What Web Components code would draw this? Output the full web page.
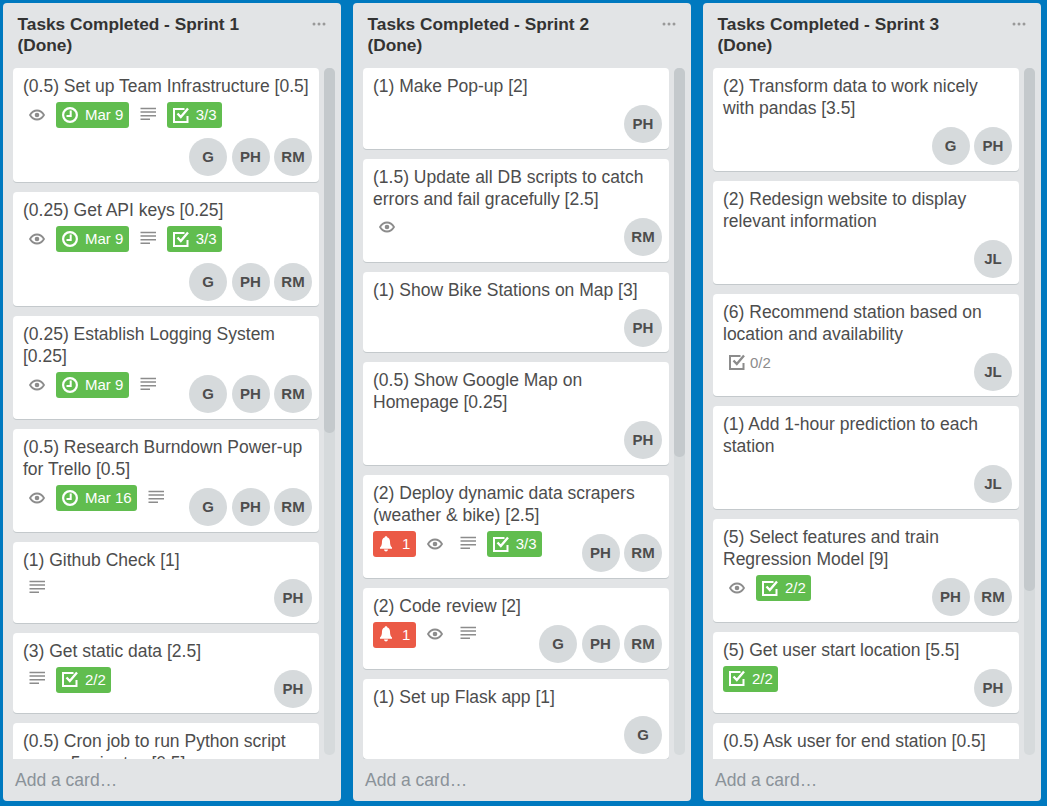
<!DOCTYPE html>
<html lang="en">
<head>
<meta charset="utf-8">
<title>Sprint board</title>
<style>
    html, body { margin: 0; height: 100%; }
    body { background: #0079bf; overflow: hidden; font-family: "Liberation Sans", Arial, sans-serif; }
</style>
</head>
<body>
<sprint-board>
    <task-list heading="Tasks Completed - Sprint 1 (Done)" thumb="365">
        <task-card>(0.5) Set up Team Infrastructure [0.5]
            <card-badge slot="badges" kind="eye"></card-badge>
            <card-badge slot="badges" kind="due" tone="green">Mar 9</card-badge>
            <card-badge slot="badges" kind="desc"></card-badge>
            <card-badge slot="badges" kind="check" tone="green">3/3</card-badge>
            <card-member slot="members">G</card-member><card-member slot="members">PH</card-member><card-member slot="members">RM</card-member>
        </task-card>
        <task-card>(0.25) Get API keys [0.25]
            <card-badge slot="badges" kind="eye"></card-badge>
            <card-badge slot="badges" kind="due" tone="green">Mar 9</card-badge>
            <card-badge slot="badges" kind="desc"></card-badge>
            <card-badge slot="badges" kind="check" tone="green">3/3</card-badge>
            <card-member slot="members">G</card-member><card-member slot="members">PH</card-member><card-member slot="members">RM</card-member>
        </task-card>
        <task-card>(0.25) Establish Logging System [0.25]
            <card-badge slot="badges" kind="eye"></card-badge>
            <card-badge slot="badges" kind="due" tone="green">Mar 9</card-badge>
            <card-badge slot="badges" kind="desc"></card-badge>
            <card-member slot="members">G</card-member><card-member slot="members">PH</card-member><card-member slot="members">RM</card-member>
        </task-card>
        <task-card>(0.5) Research Burndown Power-up for Trello [0.5]
            <card-badge slot="badges" kind="eye"></card-badge>
            <card-badge slot="badges" kind="due" tone="green">Mar 16</card-badge>
            <card-badge slot="badges" kind="desc"></card-badge>
            <card-member slot="members">G</card-member><card-member slot="members">PH</card-member><card-member slot="members">RM</card-member>
        </task-card>
        <task-card>(1) Github Check [1]
            <card-badge slot="badges" kind="desc"></card-badge>
            <card-member slot="members">PH</card-member>
        </task-card>
        <task-card>(3) Get static data [2.5]
            <card-badge slot="badges" kind="desc"></card-badge>
            <card-badge slot="badges" kind="check" tone="green">2/2</card-badge>
            <card-member slot="members">PH</card-member>
        </task-card>
        <task-card>(0.5) Cron job to run Python script every 5 minutes [0.5]</task-card>
    </task-list>

    <task-list heading="Tasks Completed - Sprint 2 (Done)" thumb="389">
        <task-card>(1) Make Pop-up [2]
            <card-member slot="members">PH</card-member>
        </task-card>
        <task-card>(1.5) Update all DB scripts to catch errors and fail gracefully [2.5]
            <card-badge slot="badges" kind="eye"></card-badge>
            <card-member slot="members">RM</card-member>
        </task-card>
        <task-card>(1) Show Bike Stations on Map [3]
            <card-member slot="members">PH</card-member>
        </task-card>
        <task-card>(0.5) Show Google Map on Homepage [0.25]
            <card-member slot="members">PH</card-member>
        </task-card>
        <task-card>(2) Deploy dynamic data scrapers (weather &amp; bike) [2.5]
            <card-badge slot="badges" kind="bell" tone="red">1</card-badge>
            <card-badge slot="badges" kind="eye"></card-badge>
            <card-badge slot="badges" kind="desc"></card-badge>
            <card-badge slot="badges" kind="check" tone="green">3/3</card-badge>
            <card-member slot="members">PH</card-member><card-member slot="members">RM</card-member>
        </task-card>
        <task-card>(2) Code review [2]
            <card-badge slot="badges" kind="bell" tone="red">1</card-badge>
            <card-badge slot="badges" kind="eye"></card-badge>
            <card-badge slot="badges" kind="desc"></card-badge>
            <card-member slot="members">G</card-member><card-member slot="members">PH</card-member><card-member slot="members">RM</card-member>
        </task-card>
        <task-card>(1) Set up Flask app [1]
            <card-member slot="members">G</card-member>
        </task-card>
    </task-list>

    <task-list heading="Tasks Completed - Sprint 3 (Done)" thumb="523">
        <task-card>(2) Transform data to work nicely with pandas [3.5]
            <card-member slot="members">G</card-member><card-member slot="members">PH</card-member>
        </task-card>
        <task-card>(2) Redesign website to display relevant information
            <card-member slot="members">JL</card-member>
        </task-card>
        <task-card>(6) Recommend station based on location and availability
            <card-badge slot="badges" kind="check">0/2</card-badge>
            <card-member slot="members">JL</card-member>
        </task-card>
        <task-card>(1) Add 1-hour prediction to each station
            <card-member slot="members">JL</card-member>
        </task-card>
        <task-card>(5) Select features and train Regression Model [9]
            <card-badge slot="badges" kind="eye"></card-badge>
            <card-badge slot="badges" kind="check" tone="green">2/2</card-badge>
            <card-member slot="members">PH</card-member><card-member slot="members">RM</card-member>
        </task-card>
        <task-card>(5) Get user start location [5.5]
            <card-badge slot="badges" kind="check" tone="green">2/2</card-badge>
            <card-member slot="members">PH</card-member>
        </task-card>
        <task-card>(0.5) Ask user for end station [0.5]</task-card>
    </task-list>
</sprint-board>

<script>
    const icons = {
        eye: '<path d="M1 8c1.800-3 4.200-4.500 7-4.500S13.200 5 15 8c-1.800 3-4.200 4.500-7 4.500S2.800 11 1 8z" fill="none" stroke="currentColor" stroke-width="1.800"/><circle cx="8" cy="8" r="2.300" fill="currentColor"/>',
        due: '<circle cx="8" cy="8" r="6.900" fill="none" stroke="currentColor" stroke-width="2.200"/><path d="M8.700 3.500v5.400H4.500" fill="none" stroke="currentColor" stroke-width="2"/>',
        desc: '<path d="M.5 1.500h15.500M.5 5.100h15.500M.5 8.700h15.500M.5 12.300h9.500" fill="none" stroke="currentColor" stroke-width="1.500"/>',
        check: '<path d="M14.500 9v6H1V2h10.500" fill="none" stroke="currentColor" stroke-width="2"/><path d="M4.500 6.500l3.300 3.500 7.200-8.500" fill="none" stroke="currentColor" stroke-width="2.400"/>',
        bell: '<path d="M7 .2c.8 0 1.300.5 1.400 1.200C10.200 2 11 3.500 11 5.400c0 3 .6 4.700 2 6v1.400H1v-1.400c1.400-1.300 2-3 2-6C3 3.500 3.800 2 5.600 1.400 5.700.7 6.200.2 7 .2z" fill="currentColor"/><path d="M5 13.600h4c0 1.100-.9 1.800-2 1.800s-2-.7-2-1.800z" fill="currentColor"/>'
    };

    class CardBadge extends HTMLElement {
        connectedCallback() {
            const kind = this.getAttribute('kind');
            const shadowRoot = this.attachShadow({ mode: 'open' });
            shadowRoot.innerHTML = `
                <style>
                    :host {
                        align-items: center;
                        border-radius: 3px;
                        box-sizing: border-box;
                        color: #8c8c8c;
                        display: inline-flex;
                        font-size: 15px;
                        height: 26px;
                        justify-content: center;
                        margin-right: 5px;
                        min-width: 28px;
                    }
                    :host([tone]) { color: #fff; padding: 0 5.300px 0 6px; }
                    :host([tone="green"]) { background: #61bd4f; }
                    :host([tone="red"]) { background: #eb5a46; }
                    :host([kind="check"]:not([tone])) { padding: 0 6px; }
                    :host([kind="check"]:not([tone])) span { margin-left: 5px; }
                    svg { display: block; flex: none; height: 16px; margin-top: -1px; width: 16px; }
                    span { margin-left: 7px; }
                </style>
                <svg viewBox="0 0 16 16">${icons[kind]}</svg><span><slot></slot></span>
            `;
            if (!this.textContent.trim()) shadowRoot.querySelector('span').remove();
        }
    }

    class CardMember extends HTMLElement {
        connectedCallback() {
            this.attachShadow({ mode: 'open' }).innerHTML = `
                <style>
                    :host {
                        align-items: center;
                        background: #d6dadc;
                        border-radius: 50%;
                        color: #4d4d4d;
                        display: flex;
                        flex: none;
                        font-size: 15px;
                        font-weight: 700;
                        height: 38px;
                        justify-content: center;
                        width: 38px;
                    }
                </style>
                <slot></slot>
            `;
        }
    }

    class TaskCard extends HTMLElement {
        connectedCallback() {
            this.attachShadow({ mode: 'open' }).innerHTML = `
                <style>
                    :host {
                        background: #fff;
                        border-radius: 4px;
                        box-shadow: 0 1px 0 #c4c9cc;
                        color: #4d4d4d;
                        display: block;
                        flex: none;
                        font-size: 17.500px;
                        line-height: 22px;
                        margin-bottom: 10px;
                        padding: 7px 7px 5.750px 10px;
                    }
                    .meta {
                        align-items: flex-start;
                        display: flex;
                        flex-wrap: wrap;
                        justify-content: space-between;
                        margin-top: 5px;
                        row-gap: 7.400px;
                    }
                    .badges { display: flex; }
                    .members { display: flex; gap: 4.500px; margin-left: auto; margin-top: 3px; }
                </style>
                <div class="title"><slot></slot></div>
                <div class="meta">
                    <div class="badges"><slot name="badges"></slot></div>
                    <div class="members"><slot name="members"></slot></div>
                </div>
            `;
        }
    }

    class TaskList extends HTMLElement {
        connectedCallback() {
            const shadowRoot = this.attachShadow({ mode: 'open' });
            shadowRoot.innerHTML = `
                <style>
                    :host {
                        background: #e2e4e6;
                        border-radius: 4px;
                        box-sizing: border-box;
                        display: flex;
                        flex: none;
                        flex-direction: column;
                        height: 798px;
                        width: 337.500px;
                    }
                    header { display: flex; flex: none; height: 65px; box-sizing: border-box; padding: 10.500px 15px 0 14.500px; }
                    h2 { color: #333; flex: 1; font-size: 17.300px; font-weight: 700; line-height: 21px; margin: 0; padding-right: 30px; }
                    svg { display: block; flex: none; margin-top: 8px; color: #999; }
                    .body { display: flex; flex: 1; min-height: 0; padding-left: 10px; }
                    .cards { display: flex; flex-direction: column; overflow: hidden; width: 306px; }
                    .track { background: #d6dadc; border-radius: 5px; flex: none; height: 687px; margin-left: 5px; width: 11px; }
                    .thumb { background: #c4c9cc; border-radius: 5px; }
                    footer { color: #8a9299; flex: none; font-size: 17.500px; height: 42px; line-height: 42px; padding-left: 12px; }
                </style>
                <header>
                    <h2></h2>
                    <svg width="14" height="4" viewBox="0 0 14 4" fill="currentColor"><circle cx="2" cy="2" r="1.500"/><circle cx="7" cy="2" r="1.500"/><circle cx="12" cy="2" r="1.500"/></svg>
                </header>
                <div class="body">
                    <div class="cards"><slot></slot></div>
                    <div class="track"><div class="thumb"></div></div>
                </div>
                <footer>Add a card…</footer>
            `;
            shadowRoot.querySelector('h2').textContent = this.getAttribute('heading');
            shadowRoot.querySelector('.thumb').style.height = this.getAttribute('thumb') + 'px';
        }
    }

    class SprintBoard extends HTMLElement {
        connectedCallback() {
            this.attachShadow({ mode: 'open' }).innerHTML = `
                <style>
                    :host { display: flex; gap: 12.500px; padding: 3px 0 0 3px; }
                </style>
                <slot></slot>
            `;
        }
    }

    customElements.define('card-badge', CardBadge);
    customElements.define('card-member', CardMember);
    customElements.define('task-card', TaskCard);
    customElements.define('task-list', TaskList);
    customElements.define('sprint-board', SprintBoard);
</script>
</body>
</html>
